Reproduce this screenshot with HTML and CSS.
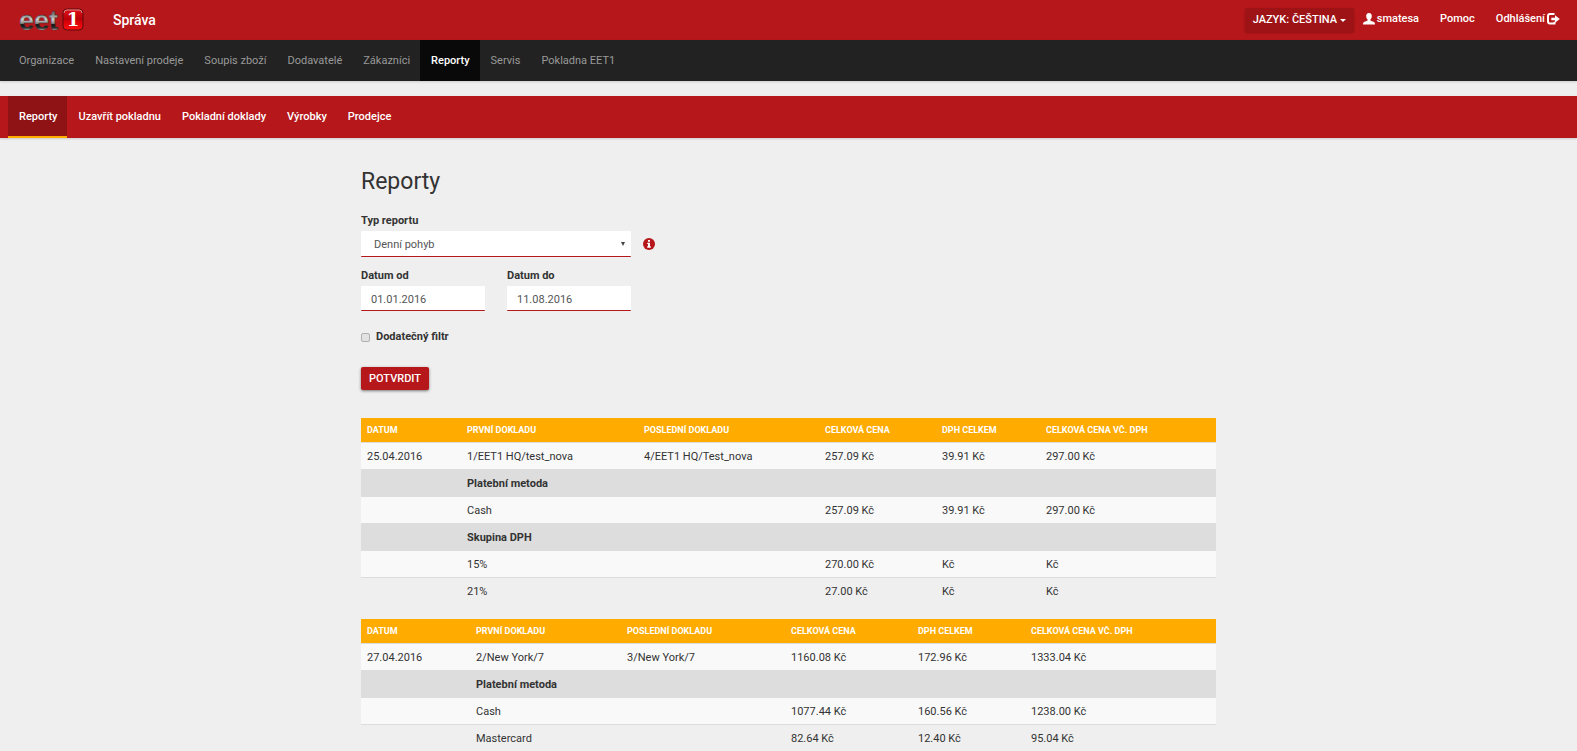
FILE: index.html
```html
<!DOCTYPE html>
<html lang="cs">
<head>
    <meta charset="UTF-8">
    <meta name="viewport" content="width=device-width, initial-scale=1.0">
    <title>Reporty</title>
    <link rel="stylesheet" href="styles.css">
</head>
<body>
    <header class="topbar">
        <a class="logo" href="#" aria-label="eet1">
            <svg width="66" height="34" viewBox="0 -4 66 34">
                <defs>
                    <linearGradient id="chrome" x1="0" y1="0" x2="0" y2="1">
                        <stop offset="0.25" stop-color="#777"/>
                        <stop offset="0.45" stop-color="#ccc"/>
                        <stop offset="0.58" stop-color="#888"/>
                        <stop offset="0.62" stop-color="#111"/>
                        <stop offset="0.74" stop-color="#333"/>
                        <stop offset="0.8" stop-color="#ccc"/>
                    </linearGradient>
                    <linearGradient id="badge" x1="0" y1="0" x2="0" y2="1">
                        <stop offset="0" stop-color="#e01018"/>
                        <stop offset="0.5" stop-color="#b80008"/>
                        <stop offset="0.55" stop-color="#d00008"/>
                        <stop offset="1" stop-color="#ff1010"/>
                    </linearGradient>
                </defs>
                <text class="logo-text" x="0" y="23" fill="url(#chrome)" stroke="#333" stroke-width="0.4">eet</text>
                <rect x="44" y="2" width="20" height="21" rx="4" fill="url(#badge)" stroke="#5c0a0c"/>
                <path d="M45 6q0-3 3-3h12q3 0 3 3" fill="none" stroke="#d88" stroke-width="1"/>
                <text class="logo-number" x="54" y="19" text-anchor="middle">1</text>
            </svg>
        </a>
        <a class="brand" href="#">Správa</a>
        <nav class="user-menu">
            <button class="language" type="button">Jazyk: čeština <span class="caret"></span></button>
            <a href="#">
                <svg width="12" height="12" viewBox="0 0 12 12"><path d="M6 0C4 0 3.100 1.300 3.200 3.200 3.300 4.800 3.900 5.900 4.600 6.500V7.600C3.600 8.200 .8 8.800 .3 9.700 0 10.300 0 11 0 11.500H12C12 11 12 10.300 11.700 9.700 11.200 8.800 8.400 8.200 7.400 7.600V6.500C8.100 5.900 8.700 4.800 8.800 3.200 8.900 1.300 8 0 6 0Z" fill="#fff"/></svg>
                smatesa
            </a>
            <a href="#">Pomoc</a>
            <a href="#">
                Odhlášení
                <svg width="13" height="12" viewBox="0 0 13 12"><path d="M7.500 1H3Q1 1 1 3V8.500Q1 10.500 3 10.500H7.500V8.800" fill="none" stroke="#fff" stroke-width="2"/><path d="M8 2.200L12.800 6 8 9.800V7.300H4.300V4.700H8Z" fill="#fff"/></svg>
            </a>
        </nav>
    </header>

    <nav class="main-nav">
        <a href="#">Organizace</a>
        <a href="#">Nastavení prodeje</a>
        <a href="#">Soupis zboží</a>
        <a href="#">Dodavatelé</a>
        <a href="#">Zákazníci</a>
        <a href="#" class="active">Reporty</a>
        <a href="#">Servis</a>
        <a href="#">Pokladna EET1</a>
    </nav>

    <nav class="sub-nav">
        <a href="#" class="active">Reporty</a>
        <a href="#">Uzavřít pokladnu</a>
        <a href="#">Pokladní doklady</a>
        <a href="#">Výrobky</a>
        <a href="#">Prodejce</a>
    </nav>

    <main class="container">
        <h1>Reporty</h1>
        <form class="report-form">
            <label for="type">Typ reportu</label>
            <div class="type-row">
                <div class="select-wrap">
                    <select id="type" name="type">
                        <option>Denní pohyb</option>
                    </select>
                </div>
                <svg width="12" height="12" viewBox="0 0 12 12"><circle cx="6" cy="6" r="6" fill="#b5171a"/><path d="M5 2H7V3.700H5ZM4.200 4.700H7V8.300H7.800V9.700H4.200V8.300H5V6.100H4.200Z" fill="#fff"/></svg>
            </div>
            <div class="dates">
                <div class="date">
                    <label for="from">Datum od</label>
                    <input type="text" id="from" name="from" value="01.01.2016">
                </div>
                <div class="date">
                    <label for="to">Datum do</label>
                    <input type="text" id="to" name="to" value="11.08.2016">
                </div>
            </div>
            <div class="filter">
                <input type="checkbox" id="filter" name="filter">
                <label for="filter">Dodatečný filtr</label>
            </div>
            <button class="submit" type="submit">Potvrdit</button>
        </form>

        <table class="report report-first">
            <colgroup><col class="c1"><col class="c2"><col class="c3"><col class="c4"><col class="c5"><col></colgroup>
            <thead>
                <tr><th>Datum</th><th>První dokladu</th><th>Poslední dokladu</th><th>Celková cena</th><th>DPH celkem</th><th>Celková cena vč. DPH</th></tr>
            </thead>
            <tbody>
                <tr class="odd"><td>25.04.2016</td><td>1/EET1 HQ/test_nova</td><td>4/EET1 HQ/Test_nova</td><td>257.09 Kč</td><td>39.91 Kč</td><td>297.00 Kč</td></tr>
                <tr class="group"><td></td><th colspan="5">Platební metoda</th></tr>
                <tr class="odd"><td></td><td>Cash</td><td></td><td>257.09 Kč</td><td>39.91 Kč</td><td>297.00 Kč</td></tr>
                <tr class="group"><td></td><th colspan="5">Skupina DPH</th></tr>
                <tr class="odd"><td></td><td>15%</td><td></td><td>270.00 Kč</td><td>Kč</td><td>Kč</td></tr>
                <tr><td></td><td>21%</td><td></td><td>27.00 Kč</td><td>Kč</td><td>Kč</td></tr>
            </tbody>
        </table>

        <table class="report report-second">
            <colgroup><col class="c1"><col class="c2"><col class="c3"><col class="c4"><col class="c5"><col></colgroup>
            <thead>
                <tr><th>Datum</th><th>První dokladu</th><th>Poslední dokladu</th><th>Celková cena</th><th>DPH celkem</th><th>Celková cena vč. DPH</th></tr>
            </thead>
            <tbody>
                <tr class="odd"><td>27.04.2016</td><td>2/New York/7</td><td>3/New York/7</td><td>1160.08 Kč</td><td>172.96 Kč</td><td>1333.04 Kč</td></tr>
                <tr class="group"><td></td><th colspan="5">Platební metoda</th></tr>
                <tr class="odd"><td></td><td>Cash</td><td></td><td>1077.44 Kč</td><td>160.56 Kč</td><td>1238.00 Kč</td></tr>
                <tr><td></td><td>Mastercard</td><td></td><td>82.64 Kč</td><td>12.40 Kč</td><td>95.04 Kč</td></tr>
            </tbody>
        </table>
    </main>
</body>
</html>
```
FILE: styles.css
```css
* {
    box-sizing: border-box;
}

body {
    margin: 0;
    font-family: Roboto, sans-serif;
    font-size: 11px;
    line-height: 16px;
    color: #333;
    background-color: #efefef;
}

a {
    color: #fff;
    text-decoration: none;
}

button,
input,
select {
    font-family: inherit;
    font-size: 11px;
    line-height: 16px;
}

/* Header */
.topbar {
    display: flex;
    align-items: center;
    height: 40px;
    padding: 0 17px 0 19px;
    background-color: #b5171a;
}

.logo {
    display: flex;
    margin-right: 28px;
}

.logo-text {
    font-family: "Liberation Sans", sans-serif;
    font-size: 27px;
    font-weight: bold;
}

.logo-number {
    font-family: "DejaVu Serif", serif;
    font-size: 18px;
    font-weight: bold;
    fill: #fff;
}

.brand {
    font-size: 14px;
    font-weight: 500;
}

.user-menu {
    display: flex;
    align-items: center;
    gap: 21px;
    margin-left: auto;
    font-weight: 500;
}

.user-menu a {
    display: flex;
    align-items: center;
    gap: 2px;
    padding-bottom: 3px;
}

.language {
    margin-right: -12px;
    padding: 4px 8px;
    border: 0;
    border-radius: 2px;
    background-color: #9e1316;
    box-shadow: 0 1px 2px rgba(0, 0, 0, 0.2);
    color: #fff;
    font-weight: 500;
    text-transform: uppercase;
}

.caret {
    display: inline-block;
    vertical-align: middle;
    border-top: 3px solid #fff;
    border-left: 3px solid transparent;
    border-right: 3px solid transparent;
}

/* Navigation */
.main-nav,
.sub-nav {
    display: flex;
    padding: 0 8px;
    box-shadow: 0 1px 2px rgba(0, 0, 0, 0.15);
}

.main-nav {
    margin-bottom: 15px;
    background-color: #222;
}

.main-nav a {
    padding: 13px 10px 12px 11px;
    color: #999;
}

.main-nav .active {
    background-color: #090909;
    color: #fff;
    font-weight: 500;
}

.sub-nav {
    background-color: #b5171a;
}

.sub-nav a {
    padding: 13px 10px 11px 11px;
    border-bottom: 2px solid transparent;
    font-weight: 500;
}

.sub-nav .active {
    border-bottom-color: #ffab00;
    background-color: #8f1214;
}

/* Content */
.container {
    max-width: 855px;
    margin: 0 auto;
    padding-top: 31px;
}

h1 {
    margin: 0 0 18px;
    font-size: 23px;
    font-weight: 400;
    line-height: 26px;
}

label {
    display: block;
    font-weight: 700;
}

.report-form {
    margin-bottom: 28px;
}

.type-row {
    display: flex;
    align-items: center;
    gap: 12px;
    margin: 2px 0 11px;
}

.select-wrap {
    position: relative;
    width: 270px;
}

.select-wrap::after {
    content: "";
    position: absolute;
    top: 11px;
    right: 6px;
    border-top: 4px solid #444;
    border-left: 2px solid transparent;
    border-right: 2px solid transparent;
}

select,
input[type="text"] {
    display: block;
    width: 100%;
    height: 25px;
    padding: 2px 10px 0;
    border: 0;
    border-bottom: 1px solid #b5171a;
    border-radius: 1px;
    background-color: #fff;
    color: #555;
    appearance: none;
}

select {
    height: 26px;
    padding-left: 13px;
}

.dates {
    display: flex;
    gap: 22px;
}

.date {
    width: 124px;
}

.date input[type="text"] {
    margin-top: 2px;
}

.filter {
    display: flex;
    align-items: center;
    gap: 6px;
    margin: 18px 0 22px;
}

.filter input {
    width: 9px;
    height: 9px;
    margin: 0;
    border: 1px solid #b0b0b0;
    border-radius: 2px;
    background-color: #e2e2e2;
    appearance: none;
}

.filter input:checked {
    background-color: #b5171a;
}

.submit {
    display: block;
    padding: 4px 8px 3px;
    border: 0;
    border-radius: 2px;
    background-color: #b5171a;
    box-shadow: 0 1px 3px rgba(0, 0, 0, 0.5);
    color: #fff;
    font-weight: 500;
    text-transform: uppercase;
}

/* Report tables */
.report {
    width: 100%;
    margin-bottom: 15px;
    border-collapse: separate;
    border-spacing: 0;
    table-layout: fixed;
}

.report th,
.report td {
    height: 27px;
    padding: 6px 6px 4px;
    text-align: left;
}

.report thead th {
    height: 24px;
    padding: 4px 6px;
    background-color: #ffab00;
    color: #fff;
    font-size: 9px;
    text-transform: uppercase;
}

.report tbody th,
.report tbody td {
    border-top: 1px solid #ddd;
}

.report .odd {
    background-color: #f9f9f9;
}

.report .group {
    background-color: #ddd;
}

.report-first .c1 { width: 100px; }
.report-first .c2 { width: 177px; }
.report-first .c3 { width: 181px; }
.report-first .c4 { width: 117px; }
.report-first .c5 { width: 104px; }

.report-second .c1 { width: 109px; }
.report-second .c2 { width: 151px; }
.report-second .c3 { width: 164px; }
.report-second .c4 { width: 127px; }
.report-second .c5 { width: 113px; }
```
